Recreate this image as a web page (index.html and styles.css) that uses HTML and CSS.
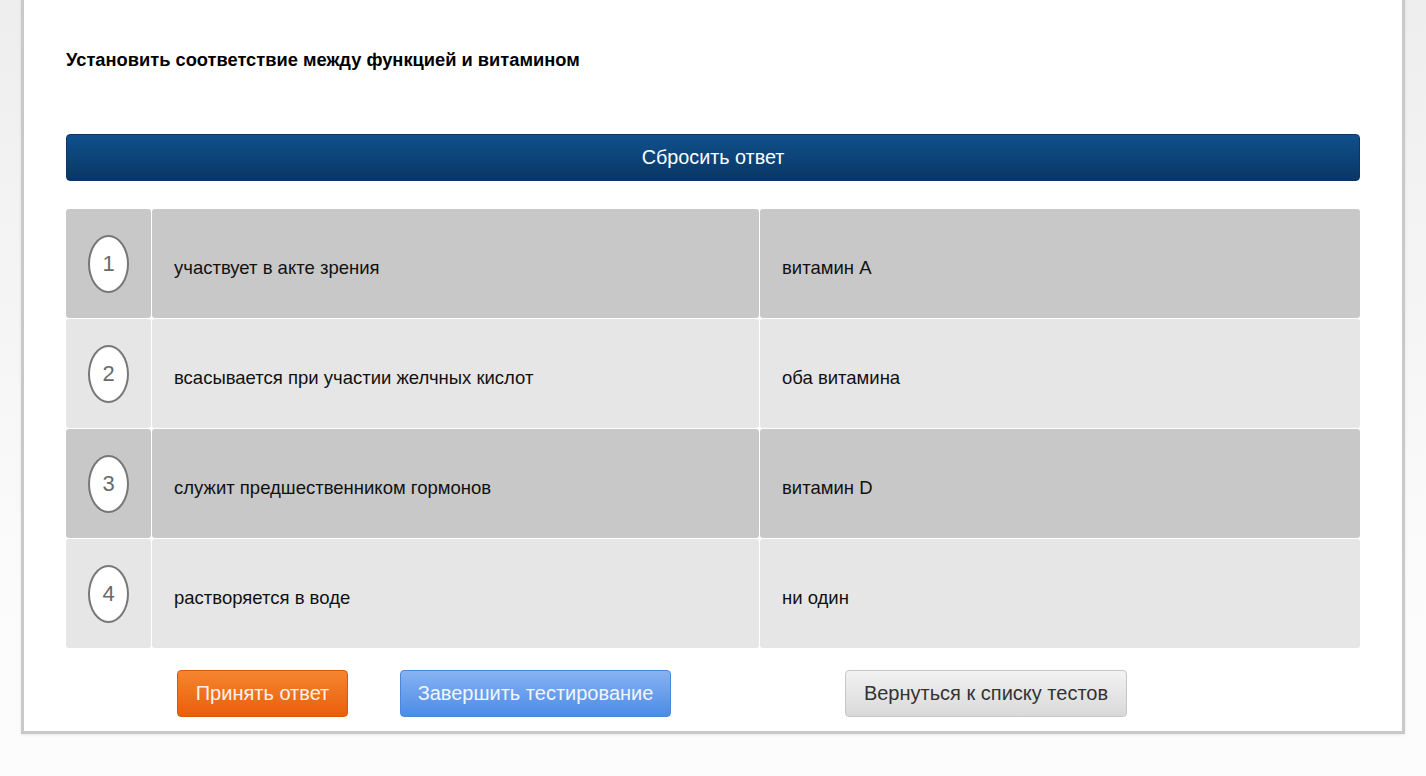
FILE: index.html
```html
<!DOCTYPE html>
<html>
  <head>
    <meta charset="utf-8">
    <title>Тест</title>
    <link rel="stylesheet" href="styles.css">
  </head>
  <body>
    <div class="panel">
      <div class="question">Установить соответствие между функцией и витамином</div>
      <div class="reset">Сбросить ответ</div>

      <div class="matches">
        <div class="cell num odd"><span class="circle">1</span></div>
        <div class="cell odd">участвует в акте зрения</div>
        <div class="cell odd">витамин А</div>

        <div class="cell num even"><span class="circle">2</span></div>
        <div class="cell even">всасывается при участии желчных кислот</div>
        <div class="cell even">оба витамина</div>

        <div class="cell num odd"><span class="circle">3</span></div>
        <div class="cell odd">служит предшественником гормонов</div>
        <div class="cell odd">витамин D</div>

        <div class="cell num even"><span class="circle">4</span></div>
        <div class="cell even">растворяется в воде</div>
        <div class="cell even">ни один</div>
      </div>

      <div class="actions">
        <button class="btn btn-accept">Принять ответ</button>
        <button class="btn btn-finish">Завершить тестирование</button>
        <button class="btn btn-back">Вернуться к списку тестов</button>
      </div>
    </div>
  </body>
</html>
```

FILE: styles.css
```css
body {
  margin: 0;
  background: linear-gradient(#eeeeee, #fcfcfc 80%);
  font-family: "Liberation Sans", Arial, sans-serif;
  height: 776px;
}

.panel {
  margin: 0 21px;
  background: #fff;
  border: 3px solid #c9c9c9;
  border-top: none;
  padding: 50px 42px 14px;
  box-shadow: 0 1px 3px rgba(0,0,0,.08);
}

.question {
  font-size: 18.3px;
  font-weight: bold;
  line-height: 20px;
  color: #000;
  margin-bottom: 64px;
}

.reset {
  height: 45px;
  line-height: 45px;
  text-align: center;
  color: #fff;
  font-size: 19.8px;
  background: linear-gradient(#10508d, #093764);
  border: 1px solid #0a3766;
  border-radius: 4px;
  margin-bottom: 28px;
}

.matches {
  display: grid;
  grid-template-columns: 85px 607px 600px;
  grid-auto-rows: 109px;
  gap: 1px;
}

.cell {
  display: flex;
  align-items: center;
  padding: 8px 0 0 22px;
  font-size: 18.5px;
  color: #111;
  border-radius: 3px;
}

.odd { background: #c8c8c8; }
.even { background: #e6e6e6; }

.num {
  justify-content: center;
  padding: 0;
}

.circle {
  display: flex;
  align-items: center;
  justify-content: center;
  width: 37px;
  height: 54px;
  border: 2px solid #777;
  border-radius: 50%;
  background: #fff;
  color: #6a6a6a;
  font-size: 22px;
}

.actions {
  display: flex;
  margin-top: 22px;
  padding-left: 111px;
}

.btn {
  height: 47px;
  font-family: inherit;
  font-size: 20px;
  border-radius: 4px;
  padding: 0;
  cursor: pointer;
}

.btn-accept {
  width: 171px;
  color: #fdf2ea;
  background: linear-gradient(#f6852f, #e95f0c);
  border: 1px solid #d9590c;
}

.btn-finish {
  width: 271px;
  margin-left: 52px;
  color: #f2f6fd;
  background: linear-gradient(#86b3f3, #4d8be6);
  border: 1px solid #4a87dc;
}

.btn-back {
  width: 282px;
  margin-left: 174px;
  color: #333;
  background: linear-gradient(#f2f2f2, #d9d9d9);
  border: 1px solid #c6c6c6;
}
```
